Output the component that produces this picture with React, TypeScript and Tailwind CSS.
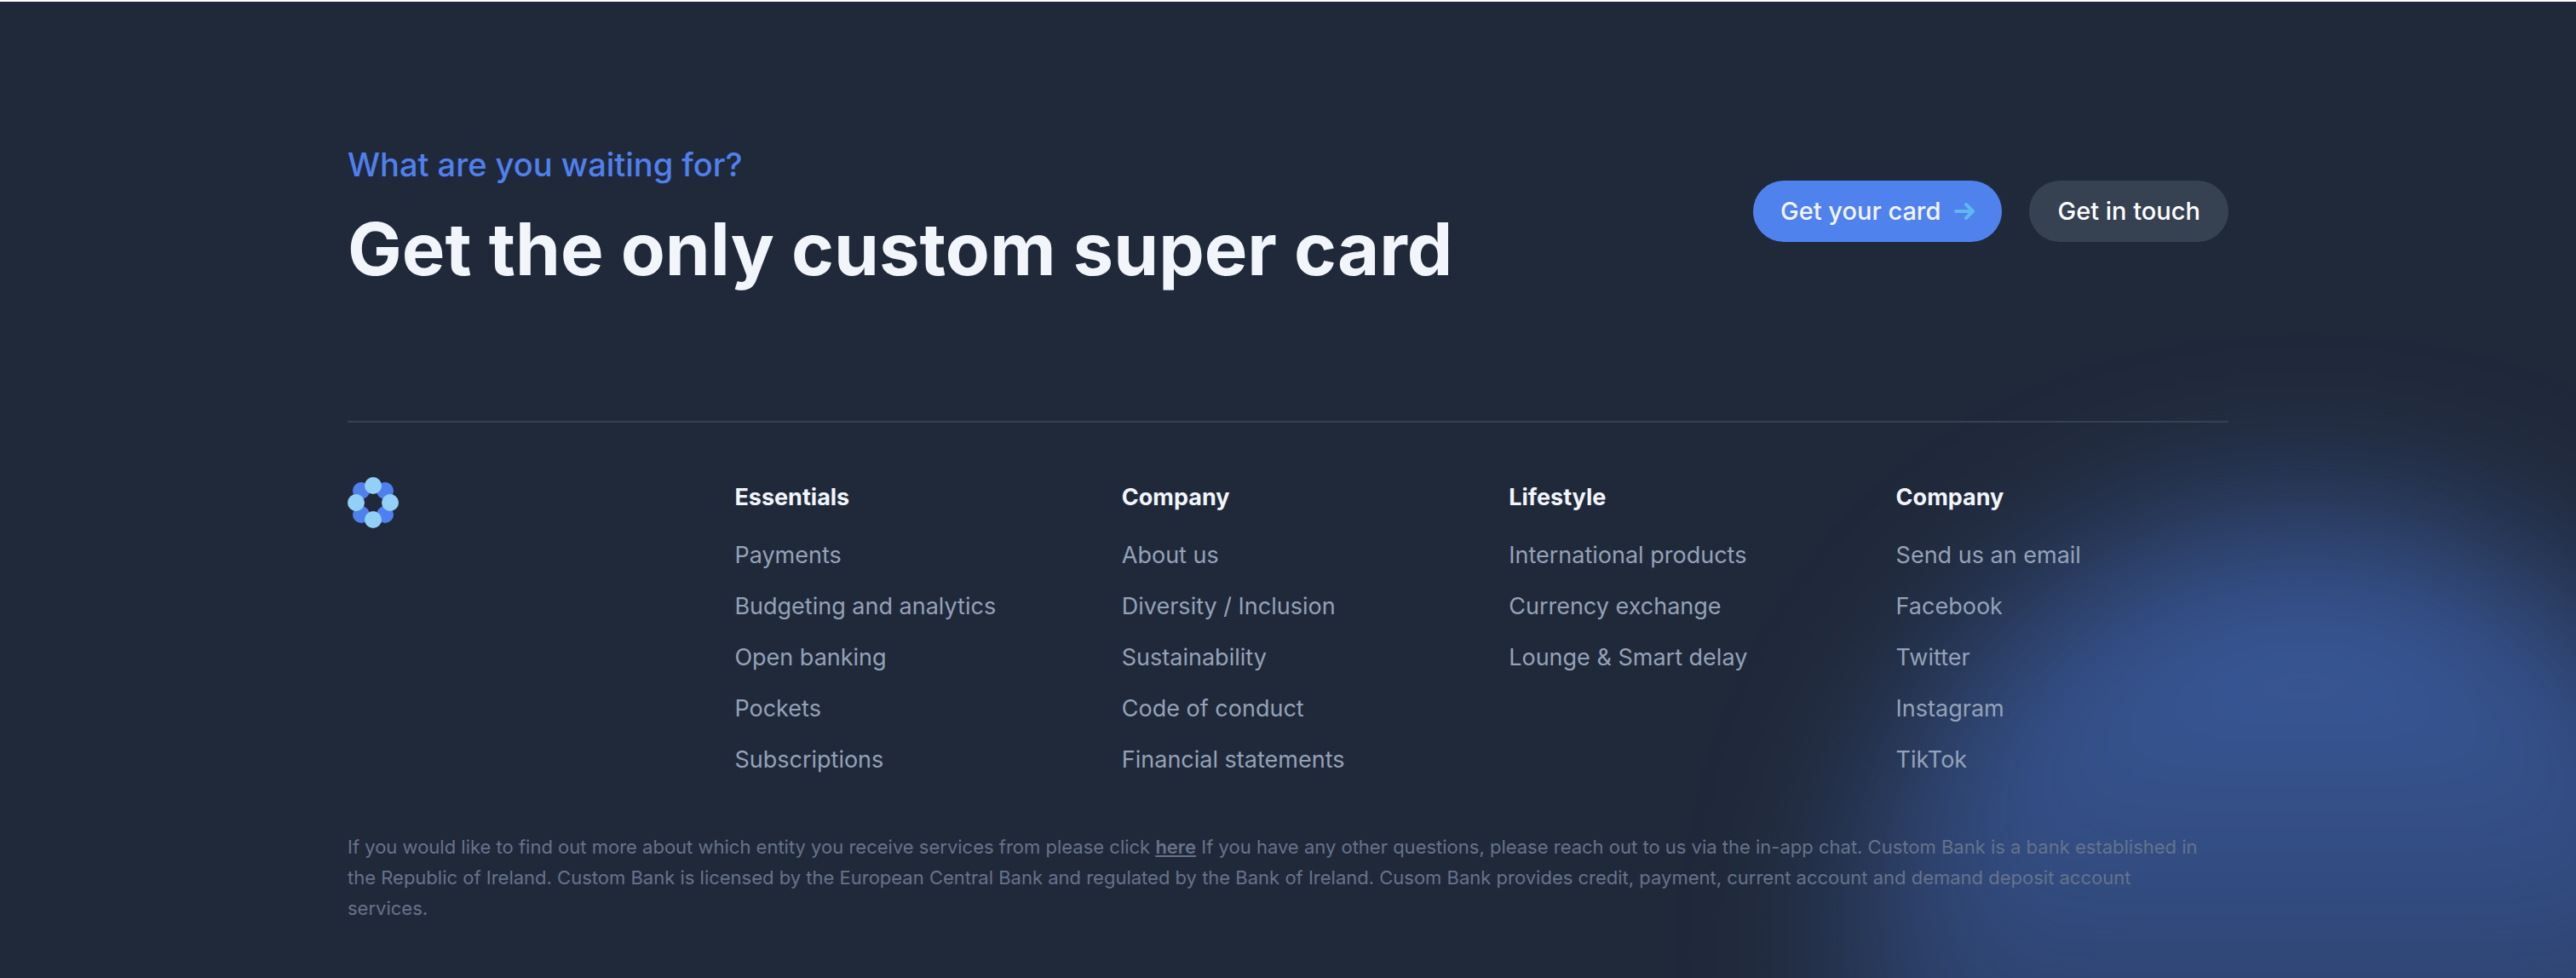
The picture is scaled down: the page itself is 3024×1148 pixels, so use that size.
type LinkColumn = { title: string; links: string[] };

const columns: LinkColumn[] = [
  {
    title: "Essentials",
    links: ["Payments", "Budgeting and analytics", "Open banking", "Pockets", "Subscriptions"],
  },
  {
    title: "Company",
    links: ["About us", "Diversity / Inclusion", "Sustainability", "Code of conduct", "Financial statements"],
  },
  {
    title: "Lifestyle",
    links: ["International products", "Currency exchange", "Lounge & Smart delay"],
  },
  {
    title: "Company",
    links: ["Send us an email", "Facebook", "Twitter", "Instagram", "TikTok"],
  },
];

function Logo() {
  return (
    <svg viewBox="0 0 60 60" className="size-[60px]" aria-hidden="true">
      <g fill="#4f80ee">
        <circle cx="16" cy="16" r="10" />
        <circle cx="44" cy="16" r="10" />
        <circle cx="16" cy="44" r="10" />
        <circle cx="44" cy="44" r="10" />
      </g>
      <g fill="#93d0f8">
        <circle cx="30" cy="10" r="10" />
        <circle cx="10" cy="30" r="10" />
        <circle cx="50" cy="30" r="10" />
        <circle cx="30" cy="50" r="10" />
      </g>
    </svg>
  );
}

function Arrow() {
  return (
    <svg
      viewBox="0 0 24 20"
      className="h-5 w-6"
      fill="none"
      stroke="#5eb8f2"
      strokeWidth="4"
      strokeLinecap="round"
      strokeLinejoin="round"
      aria-hidden="true"
    >
      <path d="M2 10H22M14 2L22 10L14 18" />
    </svg>
  );
}

export default function App() {
  return (
    <footer className="relative isolate overflow-hidden border-t-2 border-white bg-[#20293a] px-16 font-['Inter',sans-serif]">
      <div className="absolute -right-[200px] -bottom-[510px] -z-10 size-[1040px] rounded-full bg-linear-to-b from-[#4f82ed]/60 to-[#4f82ed]/8 blur-[100px]" />

      <div className="mx-auto max-w-[2208px]">
        <div className="flex flex-wrap items-center justify-between gap-8 border-b-2 border-[#364253] py-[159px]">
          <div>
            <p className="text-[38px] leading-[64px] font-medium text-[#4f80ee]">What are you waiting for?</p>
            <h2 className="mt-[25px] text-[85px] leading-none font-bold text-[#f2f5fa]">
              Get the only custom super card
            </h2>
          </div>
          <div className="flex gap-8 text-[29px] font-medium">
            <button
              type="button"
              className="flex h-[72px] items-center gap-4 rounded-full bg-[#4f82ed] px-8 text-[#f2f5fa]"
            >
              Get your card
              <Arrow />
            </button>
            <button type="button" className="h-[72px] rounded-full bg-[#364152] px-[33px] text-white">
              Get in touch
            </button>
          </div>
        </div>

        <div className="grid grid-cols-5 gap-16 pt-16">
          <a href="#" aria-label="Custom Bank home" className="self-start justify-self-start">
            <Logo />
          </a>
          {columns.map((column, index) => (
            <nav key={index} aria-label={column.title} className="text-[27px]">
              <h3 className="leading-[48px] font-bold text-[#f2f5fa]">{column.title}</h3>
              <ul className="mt-6 flex flex-col gap-5 leading-[40px] text-[#94a2b8]">
                {column.links.map((link) => (
                  <li key={link}>
                    <a href="#">{link}</a>
                  </li>
                ))}
              </ul>
            </nav>
          ))}
        </div>

        <p className="mt-16 pr-7 pb-16 text-[22px] leading-[36px] text-[#66738a]">
          If you would like to find out more about which entity you receive services from please click{" "}
          <a href="#" className="font-semibold underline">
            here
          </a>{" "}
          If you have any other questions, please reach out to us via the in-app chat. Custom Bank is a bank
          established in the Republic of Ireland. Custom Bank is licensed by the European Central Bank and
          regulated by the Bank of Ireland. Cusom Bank provides credit, payment, current account and demand
          deposit account services.
        </p>
      </div>
    </footer>
  );
}
